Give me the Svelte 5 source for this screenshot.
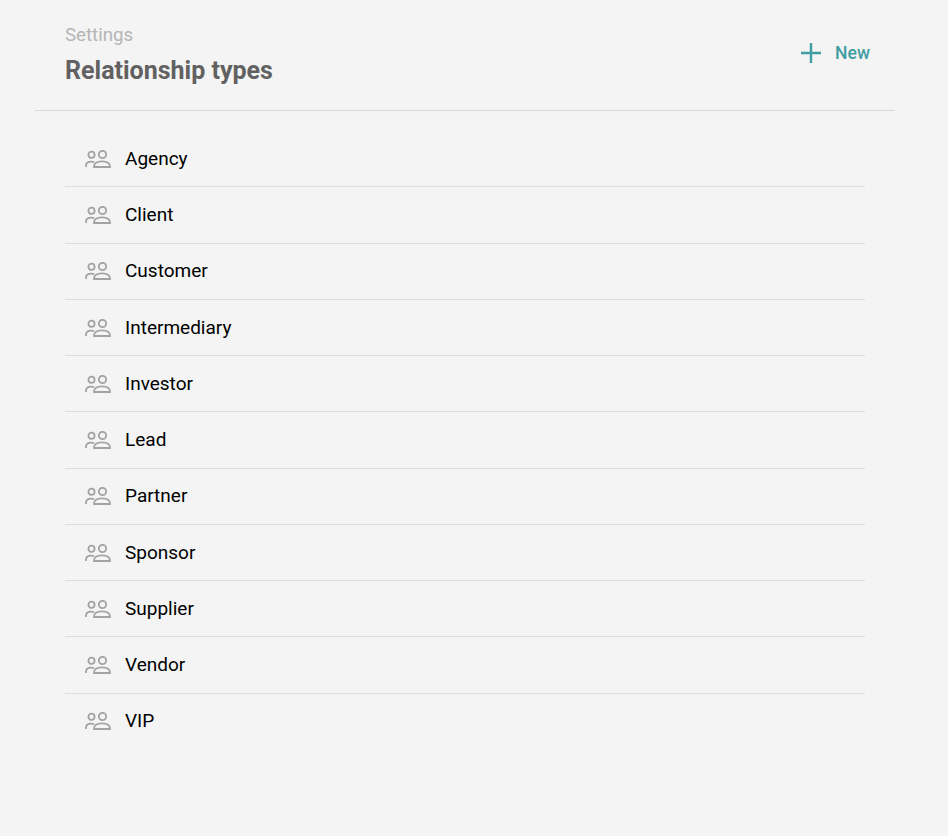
<script>
  const types = ['Agency', 'Client', 'Customer', 'Intermediary', 'Investor', 'Lead', 'Partner', 'Sponsor', 'Supplier', 'Vendor', 'VIP'];
</script>

<div class="page">
  <header class="head">
    <div class="titles">
      <div class="crumb">Settings</div>
      <h1>Relationship types</h1>
    </div>
    <button class="new">
      <svg width="22" height="22" viewBox="0 0 22 22"><path d="M11 1v20M1 11h20" fill="none" stroke="#409da2" stroke-width="2.4" /></svg>
      <span>New</span>
    </button>
  </header>

  <ul class="list">
    {#each types as t}
      <li>
        <svg class="ico" width="26" height="18" viewBox="0 0 26 18" fill="none" stroke="#a3a3a3" stroke-width="1.8">
          <circle cx="6.500" cy="4.800" r="3.100" />
          <circle cx="17.500" cy="4.500" r="3.700" />
          <path d="M1 17v-1.400c0-2.400 2.200-3.900 5.300-3.900 1 0 2 .2 2.800.5" />
          <path d="M9 17h16c.2-3.500-2.800-5.700-8-5.700s-8.200 2.200-8 5.700z" />
        </svg>
        <span>{t}</span>
      </li>
    {/each}
  </ul>
</div>

<style>
  :global(body) {
    background: #f4f4f4;
    font-family: Roboto, sans-serif;
  }

  .page {
    width: 860px;
    margin-left: 35px;
    height: 836px;
  }

  .head {
    display: flex;
    justify-content: space-between;
    align-items: center;
    height: 111px;
    box-sizing: border-box;
    padding: 1px 25px 5px 30px;
    border-bottom: 1px solid #d9d9d9;
  }

  .crumb {
    font-size: 18.7px;
    line-height: 21px;
    color: #b5b5b5;
    margin-top: 4px;
  }

  h1 {
    margin: 10px 0 0;
    font-size: 25px;
    line-height: 29px;
    font-weight: 700;
    color: #616161;
  }

  .new {
    display: flex;
    align-items: center;
    gap: 13px;
    background: none;
    border: 0;
    padding: 0;
    font: 500 17.600px Roboto, sans-serif;
    color: #409da2;
  }

  .list {
    list-style: none;
    margin: 20.15px 0 0 30px;
    padding: 0;
    width: 800px;
  }

  li {
    display: flex;
    align-items: center;
    gap: 14px;
    height: 56.25px;
    box-sizing: border-box;
    padding: 0 0 0.6px 20px;
    border-bottom: 1px solid #dedede;
    font-size: 19px;
    color: #000;
  }

  li:last-child {
    border-bottom-color: transparent;
  }

  .ico {
    margin-top: 1px;
  }
</style>
